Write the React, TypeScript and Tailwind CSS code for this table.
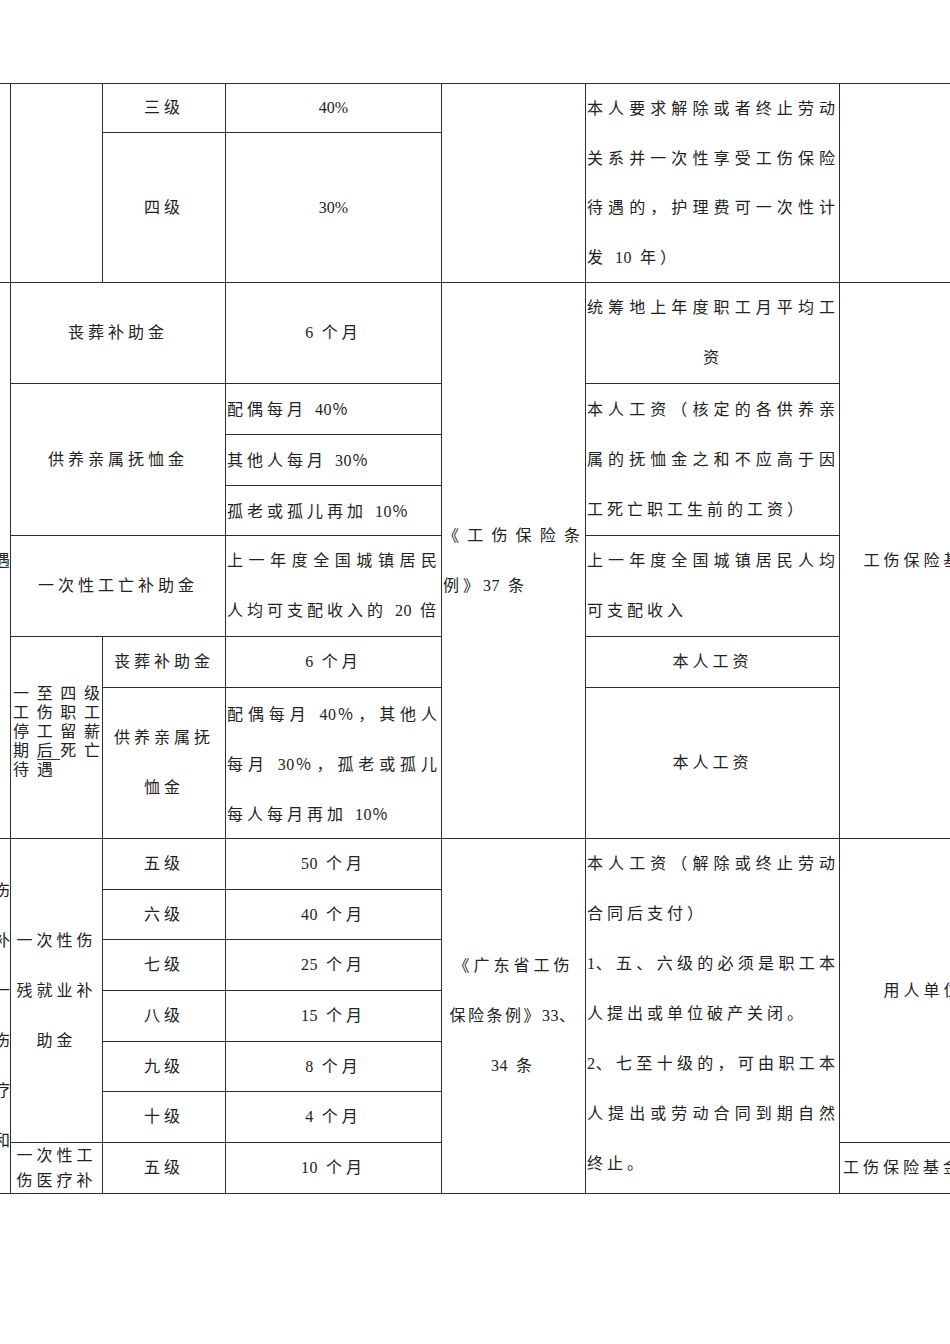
import React from 'react';

type Align = 'j' | 'l' | 'c' | 'r';

const alignCls: Record<Align, string> = {
  j: 'text-justify [text-align-last:justify]',
  l: 'text-left',
  c: 'text-center',
  r: 'text-right',
};

// digits in the doc are set tight, only the CJK gets the wide grid spacing
function T({ s }: { s: string }) {
  const parts = s.split(/(\d+%?|％)/);
  return (
    <>
      {parts.map((p, i) => {
        if (p === '％')
          return (
            <span key={i} className="font-['Noto_Sans_CJK_SC',sans-serif] tracking-[4px]">
              ％
            </span>
          );
        if (/^\d/.test(p))
          return (
            <span key={i} className="tracking-[0.5px]">
              {p}
            </span>
          );
        return <React.Fragment key={i}>{p}</React.Fragment>;
      })}
    </>
  );
}

// one printed line of a cell, Word-style 50px line pitch
function Line({ s, a = 'l', tight = false }: { s: string; a?: Align; tight?: boolean }) {
  return (
    <div className={`whitespace-nowrap ${tight ? 'h-[49.5px] leading-[49.5px]' : 'h-[50px] leading-[50px]'} ${alignCls[a]}`}>
      <T s={s} />
    </div>
  );
}

const cell = 'border border-[#2e2e2e] p-0 align-middle';

function Grade({ grade, months }: { grade: string; months: string }) {
  return (
    <>
      <td className={`${cell} text-center`}>{grade}</td>
      <td className={`${cell} text-center`}>
        <T s={months} />
      </td>
    </>
  );
}

export default function App() {
  return (
    <div className="w-[950px] h-[1344px] overflow-hidden bg-white pt-[83px] text-[16px] tracking-[4px] text-[#222] font-['Liberation_Serif','Noto_Sans_CJK_SC',serif]">
      <table className="-ml-[50px] w-[1057px] table-fixed border-collapse">
        <colgroup>
          <col className="w-[60px]" />
          <col className="w-[92px]" />
          <col className="w-[123px]" />
          <col className="w-[216px]" />
          <col className="w-[144px]" />
          <col className="w-[254px]" />
          <col className="w-[168px]" />
        </colgroup>
        <tbody>
          {/* 三级 / 四级 */}
          <tr className="h-[49px]">
            <td rowSpan={2} className={cell} />
            <td rowSpan={2} className={cell} />
            <td className={`${cell} text-center`}>三级</td>
            <td className={`${cell} text-center tracking-normal`}>40%</td>
            <td rowSpan={2} className={cell} />
            <td rowSpan={2} className={`${cell} align-top pl-[1px]`}>
              <Line a="j" tight s="本人要求解除或者终止劳动" />
              <Line a="j" tight s="关系并一次性享受工伤保险" />
              <Line a="j" tight s="待遇的，护理费可一次性计" />
              <Line tight s="发 10 年）" />
            </td>
            <td rowSpan={2} className={cell} />
          </tr>
          <tr className="h-[150px]">
            <td className={`${cell} text-center`}>四级</td>
            <td className={`${cell} text-center tracking-normal`}>30%</td>
          </tr>

          {/* 因工死亡 */}
          <tr className="h-[100px]">
            <td rowSpan={7} className={`${cell} overflow-hidden text-right tracking-normal whitespace-nowrap`}>待遇</td>
            <td colSpan={2} className={`${cell} text-center`}>丧葬补助金</td>
            <td className={`${cell} text-center`}>
              <T s="6 个月" />
            </td>
            <td rowSpan={7} className={`${cell} px-[1px]`}>
              <Line a="j" s="《工伤保险条" />
              <Line s="例》37 条" />
            </td>
            <td className={`${cell} pl-[1px]`}>
              <Line a="j" s="统筹地上年度职工月平均工" />
              <Line a="c" s="资" />
            </td>
            <td rowSpan={7} className={`${cell} text-center`}>工伤保险基金</td>
          </tr>
          <tr className="h-[51px]">
            <td colSpan={2} rowSpan={3} className={`${cell} text-center`}>供养亲属抚恤金</td>
            <td className={`${cell} pl-[1px]`}>
              <T s="配偶每月 40％" />
            </td>
            <td rowSpan={3} className={`${cell} pl-[1px]`}>
              <Line a="j" s="本人工资（核定的各供养亲" />
              <Line a="j" s="属的抚恤金之和不应高于因" />
              <Line s="工死亡职工生前的工资）" />
            </td>
          </tr>
          <tr className="h-[51px]">
            <td className={`${cell} pl-[1px]`}>
              <T s="其他人每月 30％" />
            </td>
          </tr>
          <tr className="h-[50px]">
            <td className={`${cell} pl-[1px]`}>
              <T s="孤老或孤儿再加 10％" />
            </td>
          </tr>
          <tr className="h-[101px]">
            <td colSpan={2} className={`${cell} text-center`}>一次性工亡补助金</td>
            <td className={`${cell} pl-[1px]`}>
              <Line a="j" s="上一年度全国城镇居民" />
              <Line s="人均可支配收入的 20 倍" />
            </td>
            <td className={`${cell} pl-[1px]`}>
              <Line a="j" s="上一年度全国城镇居民人均" />
              <Line s="可支配收入" />
            </td>
          </tr>
          <tr className="h-[51px]">
            <td rowSpan={2} className={`${cell} px-[2px] pb-3 leading-[19px] tracking-normal`}>
              <div className={alignCls.j}>一至四级</div>
              <div className={alignCls.j}>工伤职工</div>
              <div className={alignCls.j}>停工留薪</div>
              <div className={alignCls.j}>
                期<span className="border-b border-[#333]">后</span>死亡
              </div>
              <div className="tracking-[8px]">待遇</div>
            </td>
            <td className={`${cell} text-center`}>丧葬补助金</td>
            <td className={`${cell} text-center`}>
              <T s="6 个月" />
            </td>
            <td className={`${cell} text-center`}>本人工资</td>
          </tr>
          <tr className="h-[149px]">
            <td className={`${cell} px-[2px]`}>
              <Line a="c" s="供养亲属抚" />
              <Line a="c" s="恤金" />
            </td>
            <td className={`${cell} pl-[1px]`}>
              <Line a="j" s="配偶每月 40％，其他人" />
              <Line a="j" s="每月 30％，孤老或孤儿" />
              <Line s="每人每月再加 10％" />
            </td>
            <td className={`${cell} text-center`}>本人工资</td>
          </tr>

          {/* 伤残就业 / 医疗补助 */}
          <tr className="h-[51px]">
            <td rowSpan={7} className={`${cell} overflow-hidden tracking-normal`}>
              <Line a="r" s="工伤" />
              <Line a="r" s="残补" />
              <Line a="r" s="和一" />
              <Line a="r" s="工伤" />
              <Line a="r" s="医疗" />
              <Line a="r" s="金和" />
            </td>
            <td rowSpan={6} className={`${cell} px-[2px]`}>
              <Line a="c" s="一次性伤" />
              <Line a="c" s="残就业补" />
              <Line a="c" s="助金" />
            </td>
            <Grade grade="五级" months="50 个月" />
            <td rowSpan={7} className={`${cell} px-[1px]`}>
              <Line a="c" s="《广东省工伤" />
              <div className="h-[50px] whitespace-nowrap text-center leading-[50px] tracking-[2.5px]">
                <T s="保险条例》33、" />
              </div>
              <Line a="c" s="34 条" />
            </td>
            <td rowSpan={7} className={`${cell} align-top pl-[1px]`}>
              <Line a="j" s="本人工资（解除或终止劳动" />
              <Line s="合同后支付）" />
              <Line a="j" s="1、五、六级的必须是职工本" />
              <Line s="人提出或单位破产关闭。" />
              <Line a="j" s="2、七至十级的，可由职工本" />
              <Line a="j" s="人提出或劳动合同到期自然" />
              <Line s="终止。" />
            </td>
            <td rowSpan={6} className={`${cell} text-center`}>用人单位</td>
          </tr>
          <tr className="h-[50px]">
            <Grade grade="六级" months="40 个月" />
          </tr>
          <tr className="h-[51px]">
            <Grade grade="七级" months="25 个月" />
          </tr>
          <tr className="h-[51px]">
            <Grade grade="八级" months="15 个月" />
          </tr>
          <tr className="h-[50px]">
            <Grade grade="九级" months="8 个月" />
          </tr>
          <tr className="h-[51px]">
            <Grade grade="十级" months="4 个月" />
          </tr>
          <tr className="h-[50px]">
            <td className={`${cell} text-center leading-[25px]`}>
              <div>一次性工</div>
              <div>伤医疗补</div>
            </td>
            <Grade grade="五级" months="10 个月" />
            <td className={`${cell} pl-[3px] whitespace-nowrap`}>工伤保险基金</td>
          </tr>
        </tbody>
      </table>
    </div>
  );
}
